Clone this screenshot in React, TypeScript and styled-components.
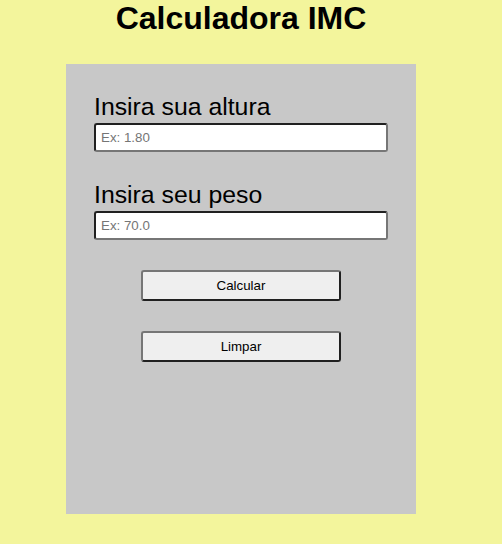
import React from "react";
import styled, { createGlobalStyle } from "styled-components";

const Global = createGlobalStyle`
  html, body { margin: 0; padding: 0; background: #f3f59c; }
  body { font-family: "Liberation Sans", Arial, sans-serif; min-height: 544px; }
`;

const Page = styled.div`
  width: 350px;
  margin-left: 66px;
  display: flex;
  flex-direction: column;
`;

const Title = styled.h1`
  margin: 0;
  height: 64px;
  font-size: 32px;
  line-height: 37px;
  font-weight: bold;
  text-align: center;
  color: #000;
`;

const Card = styled.div`
  background: #c8c8c8;
  height: 450px;
  box-sizing: border-box;
  padding: 29px 28px;
  display: flex;
  flex-direction: column;
`;

const Field = styled.div<{ $gap?: number }>`
  display: flex;
  flex-direction: column;
  margin-bottom: ${(p) => p.$gap ?? 29}px;
`;

const Label = styled.label`
  font-size: 24.8px;
  line-height: 28px;
  color: #000;
  margin-bottom: 2px;
`;

const Input = styled.input`
  box-sizing: border-box;
  width: 294px;
  height: 29px;
  border: 2px solid;
  border-color: #202020 #767676 #767676 #202020;
  border-radius: 3px;
  background: #fff;
  padding: 1px 5px;
  font-family: "Liberation Sans", Arial, sans-serif;
  font-size: 13.33px;
  &::placeholder { color: #757575; }
  &:focus { outline: none; }
`;

const Button = styled.button`
  align-self: center;
  box-sizing: border-box;
  width: 200px;
  height: 31px;
  margin-bottom: 30px;
  border: 2px solid;
  border-color: #767676 #202020 #202020 #767676;
  border-radius: 3px;
  background: #efefef;
  font-family: "Liberation Sans", Arial, sans-serif;
  font-size: 13.33px;
  color: #000;
  cursor: pointer;
`;

export default function App() {
  return (
    <>
      <Global />
      <Page>
        <Title>Calculadora IMC</Title>
        <Card>
          <Field>
            <Label htmlFor="altura">Insira sua altura</Label>
            <Input id="altura" placeholder="Ex: 1.80" />
          </Field>
          <Field $gap={30}>
            <Label htmlFor="peso">Insira seu peso</Label>
            <Input id="peso" placeholder="Ex: 70.0" />
          </Field>
          <Button>Calcular</Button>
          <Button>Limpar</Button>
        </Card>
      </Page>
    </>
  );
}
